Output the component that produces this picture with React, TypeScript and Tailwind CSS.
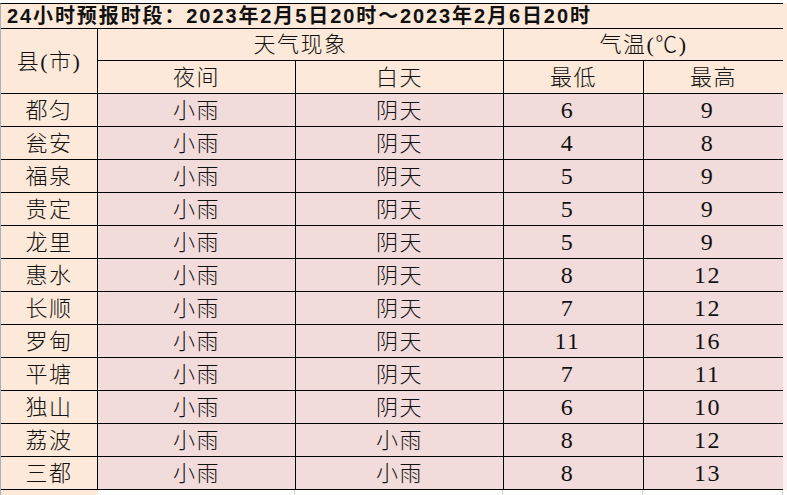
import React from "react";

const rows: [string, string, string, string, string][] = [
  ["都匀", "小雨", "阴天", "6", "9"],
  ["瓮安", "小雨", "阴天", "4", "8"],
  ["福泉", "小雨", "阴天", "5", "9"],
  ["贵定", "小雨", "阴天", "5", "9"],
  ["龙里", "小雨", "阴天", "5", "9"],
  ["惠水", "小雨", "阴天", "8", "12"],
  ["长顺", "小雨", "阴天", "7", "12"],
  ["罗甸", "小雨", "阴天", "11", "16"],
  ["平塘", "小雨", "阴天", "7", "11"],
  ["独山", "小雨", "阴天", "6", "10"],
  ["荔波", "小雨", "小雨", "8", "12"],
  ["三都", "小雨", "小雨", "8", "13"],
];

const serif = "font-['Liberation_Serif','Noto_Sans_CJK_SC',serif] font-light";
const cell =
  "flex items-center justify-center border-r border-b border-black text-[22px] tracking-[1.5px] text-[#111]";

export default function App() {
  return (
    <div className="w-[787px] h-[495px] bg-white overflow-hidden pt-[3px]">
      <div className="flex">
        <div
          className={`grid w-[783px] grid-cols-[97px_198px_208px_140px_140px] grid-rows-[25px_32px_33px_repeat(12,33px)] border-t border-black border-l border-l-[#b0b0b0] ${serif}`}
        >
          <div className="col-span-5 flex items-center border-r border-b border-black bg-[#fde9d9] pl-[6px] font-['Liberation_Sans','Noto_Sans_CJK_SC',sans-serif] text-[20px] font-bold tracking-[1.9px] text-[#111] leading-none">
            24小时预报时段：2023年2月5日20时～2023年2月6日20时
          </div>
          <div className={`${cell} row-span-2 bg-[#fde9d9]`}>县(市)</div>
          <div className={`${cell} col-span-2 bg-[#fde9d9]`}>天气现象</div>
          <div className={`${cell} col-span-2 bg-[#fde9d9]`}>气温(℃)</div>
          <div className={`${cell} bg-[#fde9d9]`}>夜间</div>
          <div className={`${cell} bg-[#fde9d9]`}>白天</div>
          <div className={`${cell} bg-[#fde9d9]`}>最低</div>
          <div className={`${cell} bg-[#fde9d9]`}>最高</div>
          {rows.map((r) => (
            <React.Fragment key={r[0]}>
              <div className={`${cell} bg-[#fde9d9]`}>{r[0]}</div>
              <div className={`${cell} bg-[#f2dcdb]`}>{r[1]}</div>
              <div className={`${cell} bg-[#f2dcdb]`}>{r[2]}</div>
              <div className={`${cell} bg-[#f2dcdb] pr-[12px] text-[24px]`}>{r[3]}</div>
              <div className={`${cell} bg-[#f2dcdb] pr-[12px] text-[24px]`}>{r[4]}</div>
            </React.Fragment>
          ))}
        </div>
        <div className="flex w-[4px] flex-col">
          <div className="h-[91px] bg-[#fde9d9]" />
          <div className="flex-1 bg-[#fbf1f0]" />
        </div>
      </div>
      <div className="flex h-[10px]">
        <div className="w-[97px] border-l border-[#b0b0b0] bg-[#fde9d9]" />
        <div className="w-[198px] border-r border-[#d9d9d9]" />
        <div className="w-[208px] border-r border-[#d9d9d9]" />
        <div className="w-[140px] border-r border-[#d9d9d9]" />
        <div className="w-[140px] border-r border-[#d9d9d9]" />
      </div>
    </div>
  );
}
